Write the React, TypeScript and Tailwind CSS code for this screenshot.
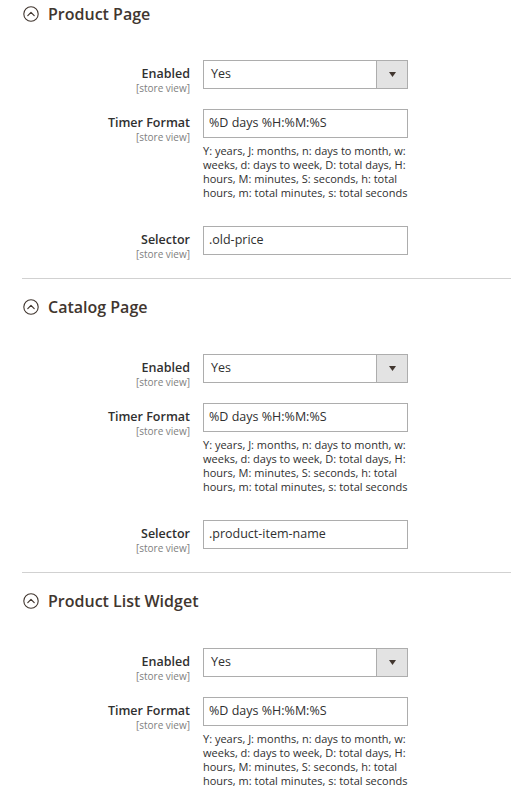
import React from "react";

const NOTE_LINES = [
  "Y: years, J: months, n: days to month, w:",
  "weeks, d: days to week, D: total days, H:",
  "hours, M: minutes, S: seconds, h: total",
  "hours, m: total minutes, s: total seconds",
];

function CollapseIcon() {
  return (
    <svg width="16" height="16" viewBox="0 0 16 16" fill="none" className="shrink-0">
      <circle cx="8" cy="8" r="7.2" stroke="#41362f" strokeWidth="1.1" />
      <polyline points="4.8,9.6 8,6.4 11.2,9.6" stroke="#41362f" strokeWidth="1.2" fill="none" strokeLinejoin="round" strokeLinecap="round" />
    </svg>
  );
}

function Label({ text }: { text: string }) {
  return (
    <div className="w-[190px] shrink-0 text-right pt-[6px]">
      <div className="text-[12.5px] leading-[16px] font-semibold text-[#303030]">{text}</div>
      <div className="text-[10px] leading-[12px] text-[#808080]">[store view]</div>
    </div>
  );
}

function SelectField() {
  return (
    <div className="w-[205px] h-[29px] border border-[#adadad] flex items-stretch bg-white">
      <div className="flex-1 flex items-center pl-[7px] text-[12.5px] text-[#303030]">Yes</div>
      <div className="w-[31px] border-l border-[#adadad] bg-[#e3e3e3] flex items-center justify-center">
        <svg width="7" height="5" viewBox="0 0 7 5">
          <polygon points="0,0 7,0 3.5,5" fill="#41362f" />
        </svg>
      </div>
    </div>
  );
}

function InputField({ value }: { value: string }) {
  return (
    <div className="w-[205px] h-[29px] border border-[#adadad] flex items-center pl-[5px] text-[12.5px] text-[#303030] bg-white">
      {value}
    </div>
  );
}

function Section({
  title,
  selector,
  first,
  showSelector = true,
}: {
  title: string;
  selector: string;
  first?: boolean;
  showSelector?: boolean;
}) {
  return (
    <div className={first ? "" : "border-t border-[#d1d1d1] pt-[14px]"}>
      <div className="h-[28px] flex items-center ml-[1px]">
        <CollapseIcon />
        <span className="ml-[9px] text-[16px] font-semibold text-[#41362f] leading-none">{title}</span>
      </div>
      <div className={first ? "flex flex-col mt-[32px]" : "flex flex-col mt-[33px]"}>
        <div className="flex items-start -ml-[22px]">
          <Label text="Enabled" />
          <div className="ml-[13px]">
            <SelectField />
          </div>
        </div>
        <div className="flex items-start -ml-[22px] mt-[15px]">
          <Label text="Timer Format" />
          <div className="ml-[13px]">
            <InputField value="%D days %H:%M:%S" />
            <div className="mt-[6px] text-[11px] leading-[14px] text-[#303030]">
              {NOTE_LINES.map((l) => (
                <div key={l} className="whitespace-nowrap">{l}</div>
              ))}
            </div>
          </div>
        </div>
        {showSelector && (
          <div className="flex items-start -ml-[22px] mt-[26px] mb-[18px]">
            <Label text="Selector" />
            <div className="ml-[13px]">
              <InputField value={selector} />
            </div>
          </div>
        )}
      </div>
    </div>
  );
}

export default function App() {
  return (
    <div
      className="w-[511px] h-[796px] overflow-hidden bg-white pl-[22px]"
      style={{ fontFamily: '"Open Sans", "Noto Sans", sans-serif' }}
    >
      <Section title="Product Page" selector=".old-price" first />
      <Section title="Catalog Page" selector=".product-item-name" />
      <Section title="Product List Widget" selector="" showSelector={false} />
    </div>
  );
}
